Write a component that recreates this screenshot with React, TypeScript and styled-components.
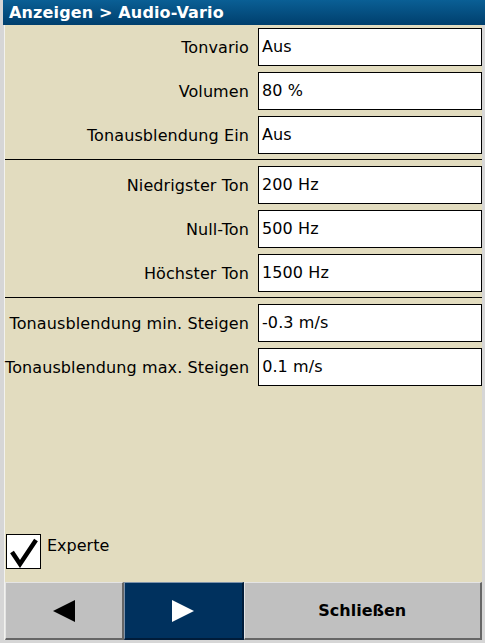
import React from "react";
import styled, { createGlobalStyle } from "styled-components";

const Global = createGlobalStyle`
  html, body { margin: 0; padding: 0; background: #d6d6d6; }
  body { font-family: "DejaVu Sans", "Liberation Sans", sans-serif; }
  * { box-sizing: border-box; }
`;

const Frame = styled.div`
  width: 485px;
  height: 643px;
  display: flex;
  flex-direction: column;
  background: #d6d6d6;
  padding-bottom: 3px;
`;

const TitleBar = styled.div`
  height: 25px;
  margin-left: 3px;
  padding-left: 6px;
  background: linear-gradient(#0a5f95, #003f6d);
  color: #ffffff;
  font-weight: bold;
  font-size: 16px;
  line-height: 25px;
  letter-spacing: 0.15px;
  white-space: nowrap;
`;

const Body = styled.div`
  flex: 1;
  display: flex;
  flex-direction: column;
  margin: 0 3px 0 4px;
  background: #e2dcbf;
  border-left: 1px solid #f2f2ee;
`;

const Form = styled.div`
  display: flex;
  flex-direction: column;
`;

const Row = styled.div`
  display: grid;
  grid-template-columns: 1fr 224px;
  column-gap: 9px;
  height: 38px;
  margin-top: 6px;
  align-items: center;
  &:first-child { margin-top: 3px; }
`;

const Label = styled.div`
  text-align: right;
  font-size: 16px;
  letter-spacing: 0.1px;
  color: #000;
  white-space: nowrap;
`;

const Field = styled.div`
  height: 38px;
  background: #ffffff;
  border: 1px solid #000;
  padding-left: 3px;
  font-size: 16px;
  letter-spacing: 0.1px;
  line-height: 36px;
  color: #000;
`;

const Divider = styled.div`
  height: 1px;
  margin-top: 5px;
  background: #000;
`;

const Spacer = styled.div`
  flex: 1;
`;

const CheckRow = styled.div`
  display: flex;
  align-items: flex-start;
  gap: 6px;
  padding-left: 1px;
  margin-bottom: 13px;
`;

const CheckBox = styled.div`
  width: 35px;
  height: 35px;
  background: #fff;
  border: 1px solid #000;
  display: flex;
  align-items: center;
  justify-content: center;
`;

const CheckLabel = styled.div`
  font-size: 16px;
  line-height: 20px;
  margin-top: 2px;
  color: #000;
`;

const ButtonBar = styled.div`
  display: grid;
  grid-template-columns: 1fr 1fr 2fr;
  height: 58px;
`;

const Button = styled.div<{ $active?: boolean }>`
  display: flex;
  align-items: center;
  justify-content: center;
  background: ${(p) => (p.$active ? "#00315e" : "#c0c0c0")};
  border-style: solid;
  border-width: 1px 2px 2px 1px;
  border-color: ${(p) =>
    p.$active
      ? "#7d93ab #001c3a #001c3a #7d93ab"
      : "#e4e4e4 #666666 #666666 #e4e4e4"};
  color: ${(p) => (p.$active ? "#fff" : "#000")};
  font-size: 16px;
  font-weight: bold;
`;

export default function App() {
  return (
    <>
      <Global />
      <Frame>
        <TitleBar>Anzeigen &gt; Audio-Vario</TitleBar>
        <Body>
          <Form>
            <Row><Label>Tonvario</Label><Field>Aus</Field></Row>
            <Row><Label>Volumen</Label><Field>80 %</Field></Row>
            <Row><Label>Tonausblendung Ein</Label><Field>Aus</Field></Row>
            <Divider />
            <Row><Label>Niedrigster Ton</Label><Field>200 Hz</Field></Row>
            <Row><Label>Null-Ton</Label><Field>500 Hz</Field></Row>
            <Row><Label>Höchster Ton</Label><Field>1500 Hz</Field></Row>
            <Divider />
            <Row><Label>Tonausblendung min. Steigen</Label><Field>-0.3 m/s</Field></Row>
            <Row><Label>Tonausblendung max. Steigen</Label><Field>0.1 m/s</Field></Row>
          </Form>
          <Spacer />
          <CheckRow>
            <CheckBox>
              <svg width="33" height="33" viewBox="0 0 33 33">
                <polyline points="5,17 13,29 29,5" fill="none" stroke="#000" strokeWidth="4.5" strokeLinejoin="miter" />
              </svg>
            </CheckBox>
            <CheckLabel>Experte</CheckLabel>
          </CheckRow>
          <ButtonBar>
            <Button>
              <svg width="22" height="22" viewBox="0 0 22 22">
                <polygon points="0,11 22,0 22,22" fill="#000" />
              </svg>
            </Button>
            <Button $active>
              <svg width="22" height="22" viewBox="0 0 22 22">
                <polygon points="22,11 0,0 0,22" fill="#fff" />
              </svg>
            </Button>
            <Button>Schließen</Button>
          </ButtonBar>
        </Body>
      </Frame>
    </>
  );
}
